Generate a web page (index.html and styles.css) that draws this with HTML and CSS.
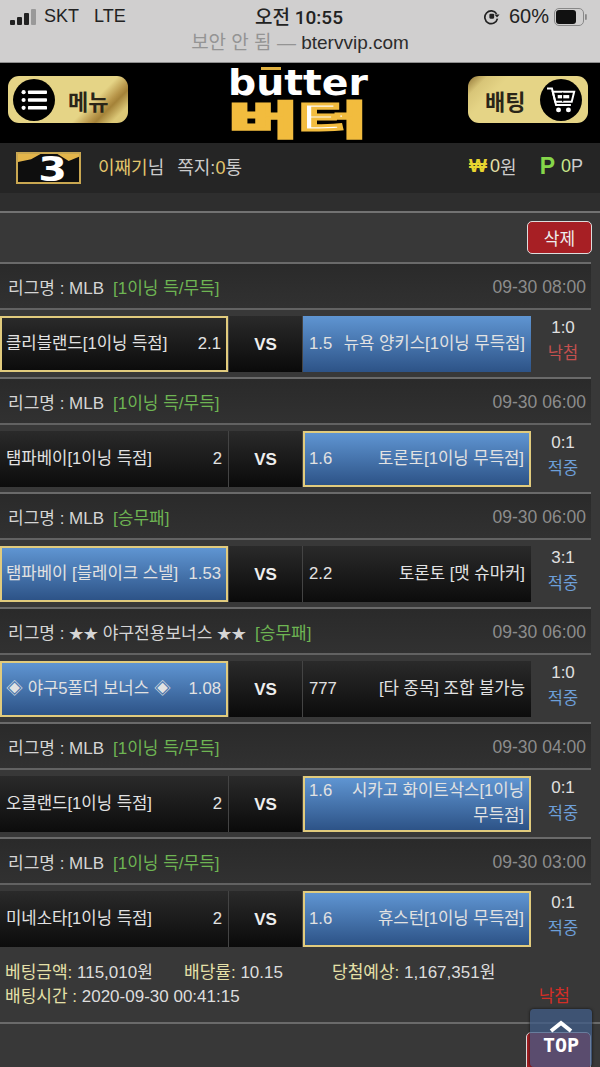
FILE: index.html
```
<!DOCTYPE html>
<html lang="ko">
<head>
<meta charset="utf-8">
<title>butter</title>
<link rel="stylesheet" href="styles.css">
</head>
<body>
<div class="browser">
  <div class="status">
    <div class="st-left">
      <svg width="27" height="16" viewBox="0 0 27 16"><rect x="0" y="11" width="5" height="5" rx="1" fill="#222"/><rect x="7" y="8" width="5" height="8" rx="1" fill="#222"/><rect x="14" y="4" width="5" height="12" rx="1" fill="#222"/><rect x="21" y="0" width="5" height="16" rx="1" fill="#999"/></svg>
      <span>SKT</span><span class="lte">LTE</span>
    </div>
    <div class="st-time">오전 10:55</div>
    <div class="st-right">
      <svg width="17" height="17" viewBox="0 0 16 16"><path d="M12.8 5.5A6 6 0 1 0 13.6 10" fill="none" stroke="#222" stroke-width="1.6"/><path d="M15.6 6.2H10.8L13.2 9z" fill="#222"/><rect x="6" y="5.5" width="4.5" height="4.5" rx="1" fill="#222"/></svg>
      <span class="pct">60%</span>
      <svg width="34" height="18" viewBox="0 0 34 18"><rect x="0.5" y="0.5" width="29" height="17" rx="4.5" fill="none" stroke="#888"/><rect x="2" y="2" width="20" height="14" rx="3" fill="#111"/><rect x="31" y="6" width="1.8" height="6" rx="0.9" fill="#888"/></svg>
    </div>
  </div>
  <div class="url"><span class="insecure">보안 안 됨 —</span> btervvip.com</div>
</div>
<header class="head">
  <div class="pill pill-menu">
    <span class="disc"><svg width="30" height="26" viewBox="0 0 30 26"><g fill="#fff"><circle cx="3" cy="4" r="2.4"/><circle cx="3" cy="13" r="2.4"/><circle cx="3" cy="22" r="2.4"/><rect x="8" y="2" width="22" height="4" rx="1"/><rect x="8" y="11" width="22" height="4" rx="1"/><rect x="8" y="20" width="22" height="4" rx="1"/></g></svg></span>
    <span class="pill-label">메뉴</span>
  </div>
  <div class="logo">
    <svg class="logo-svg" width="140" height="79" viewBox="0 0 140 79">
      <defs>
        <linearGradient id="logoFill" x1="0" x2="1" y1="0" y2="0">
          <stop offset="0.53" stop-color="#f2bc3e"/><stop offset="0.53" stop-color="#fff"/>
          <stop offset="0.82" stop-color="#fff"/><stop offset="0.82" stop-color="#f2bc3e"/>
        </linearGradient>
      </defs>
      <rect x="33" y="4" width="20" height="3" fill="#e0b040"/>
      <text x="0" y="32" class="logo-en" textLength="140" lengthAdjust="spacingAndGlyphs">butter</text>
      <text x="1" y="71" class="logo-ko" textLength="138" lengthAdjust="spacingAndGlyphs" fill="url(#logoFill)">버터</text>
    </svg>
  </div>
  <div class="pill pill-bet">
    <span class="pill-label">배팅</span>
    <span class="disc"><svg width="36" height="34" viewBox="0 0 36 34"><path d="M1 3h6l5 20h18" fill="none" stroke="#fff" stroke-width="2.4"/><path d="M8 7h26l-3 12H11z" fill="none" stroke="#fff" stroke-width="2.4"/><path d="M14 11h14v4H14z" fill="#fff"/><path d="M20 8v11" stroke="#000" stroke-width="1.5"/><circle cx="15" cy="29" r="3" fill="#fff"/><circle cx="27" cy="29" r="3" fill="#fff"/></svg></span>
  </div>
</header>
<section class="user">
  <div class="user-left">
    <span class="badge">
      <svg class="badge-bg" width="65" height="32" viewBox="0 0 65 32" preserveAspectRatio="none"><rect width="65" height="32" fill="#0e0e0e"/><path d="M0 0H24L14 6 0 9zM65 0H42L54 8 65 3z" fill="#e3b54a"/></svg>
      <span class="badge-num">3</span>
    </span>
    <span class="gold">이째기</span><span>님</span>
    <span class="note">쪽지:<span class="gold">0</span>통</span>
  </div>
  <div class="user-right">
    <span class="won">₩</span><span class="cream">0</span><span>원</span>
    <span class="pt">P</span><span class="lime">0</span><span>P</span>
  </div>
</section>
<main class="content">
  <div class="del-row"><button class="del">삭제</button></div>

  <article class="game">
    <div class="league"><span>리그명 : MLB</span><span class="kind">[1이닝 득/무득]</span><time>09-30 08:00</time></div>
    <div class="match">
      <div class="team sel-dark"><span>클리블랜드[1이닝 득점]</span><span>2.1</span></div>
      <div class="vs">VS</div>
      <div class="team blue"><span>1.5</span><span>뉴욕 양키스[1이닝 무득점]</span></div>
      <div class="res"><span>1:0</span><span class="lose">낙첨</span></div>
    </div>
  </article>

  <article class="game">
    <div class="league"><span>리그명 : MLB</span><span class="kind">[1이닝 득/무득]</span><time>09-30 06:00</time></div>
    <div class="match">
      <div class="team"><span>탬파베이[1이닝 득점]</span><span>2</span></div>
      <div class="vs">VS</div>
      <div class="team blue sel"><span>1.6</span><span>토론토[1이닝 무득점]</span></div>
      <div class="res"><span>0:1</span><span class="win">적중</span></div>
    </div>
  </article>

  <article class="game">
    <div class="league"><span>리그명 : MLB</span><span class="kind">[승무패]</span><time>09-30 06:00</time></div>
    <div class="match">
      <div class="team blue sel"><span>탬파베이 [블레이크 스넬]</span><span>1.53</span></div>
      <div class="vs">VS</div>
      <div class="team"><span>2.2</span><span>토론토 [맷 슈마커]</span></div>
      <div class="res"><span>3:1</span><span class="win">적중</span></div>
    </div>
  </article>

  <article class="game">
    <div class="league"><span>리그명 : <span class="star">★★</span> 야구전용보너스 <span class="star">★★</span></span><span class="kind">[승무패]</span><time>09-30 06:00</time></div>
    <div class="match">
      <div class="team blue sel"><span>◈ 야구5폴더 보너스 ◈</span><span>1.08</span></div>
      <div class="vs">VS</div>
      <div class="team"><span>777</span><span>[타 종목] 조합 불가능</span></div>
      <div class="res"><span>1:0</span><span class="win">적중</span></div>
    </div>
  </article>

  <article class="game">
    <div class="league"><span>리그명 : MLB</span><span class="kind">[1이닝 득/무득]</span><time>09-30 04:00</time></div>
    <div class="match">
      <div class="team"><span>오클랜드[1이닝 득점]</span><span>2</span></div>
      <div class="vs">VS</div>
      <div class="team blue sel two-line"><span>1.6</span><span class="wrap">시카고 화이트삭스[1이닝 무득점]</span></div>
      <div class="res"><span>0:1</span><span class="win">적중</span></div>
    </div>
  </article>

  <article class="game">
    <div class="league"><span>리그명 : MLB</span><span class="kind">[1이닝 득/무득]</span><time>09-30 03:00</time></div>
    <div class="match">
      <div class="team"><span>미네소타[1이닝 득점]</span><span>2</span></div>
      <div class="vs">VS</div>
      <div class="team blue sel"><span>1.6</span><span>휴스턴[1이닝 무득점]</span></div>
      <div class="res"><span>0:1</span><span class="win">적중</span></div>
    </div>
  </article>

  <div class="summary">
    <div class="sum-line">
      <span class="s1"><span class="cream">베팅금액:</span> 115,010원</span>
      <span class="s2"><span class="cream">배당률:</span> 10.15</span>
      <span><span class="cream">당첨예상:</span> 1,167,351원</span>
    </div>
    <div class="sum-line sum-second">
      <span><span class="cream">배팅시간 :</span> 2020-09-30 00:41:15</span>
      <span class="red">낙첨</span>
    </div>
  </div>
  <div class="next"><span class="del-peek"></span></div>
</main>
<a class="top"><svg width="24" height="13" viewBox="0 0 24 13"><path d="M2 11 12 3l10 8" fill="none" stroke="#fff" stroke-width="4"/></svg><span>TOP</span></a>
</body>
</html>
```
FILE: styles.css
```
* { box-sizing: border-box; }
html, body { margin: 0; padding: 0; }
body {
  width: 600px; height: 1067px; overflow: hidden; position: relative;
  background: #383838; color: #ddd;
  font-family: "Liberation Sans", "Noto Sans CJK KR", sans-serif;
  font-size: 17px;
}
.browser { height: 63px; background: #d0cfcf; border-bottom: 1px solid #8e8e8e; color: #222; }
.status { height: 33px; display: grid; grid-template-columns: 1fr auto 1fr; align-items: center; padding: 0 12px 0 10px; font-size: 18px; }
.st-left { display: flex; align-items: center; gap: 7px; }
.lte { margin-left: 8px; }
.st-time { font-family: Roboto, "Noto Sans CJK KR", sans-serif; font-size: 19px; font-weight: 500; margin-top: -2px; }
.st-right { display: flex; align-items: center; justify-content: flex-end; gap: 5px; }
.pct { font-size: 20px; margin-left: 4px; }
.url { text-align: center; font-size: 19px; height: 29px; line-height: 20px; color: #2c2c2c; }
.insecure { color: #949494; }
.head { height: 80px; background: #000; display: flex; justify-content: space-between; align-items: flex-start; padding: 13px 12px 0 8px; }
.pill { width: 120px; height: 47px; border-radius: 11px; display: flex; align-items: center; color: #222; }
.pill-menu { padding-left: 5px; gap: 13px; background: linear-gradient(135deg, #e5d486 0 66%, #b8964a 76%, #a48238 80%, #dcc877 90%); }
.pill-bet { padding-left: 17px; gap: 15px; background: linear-gradient(135deg, #8f7233 0, #d8c578 12%, #e5d486 25%); }
.disc { flex: none; width: 42px; height: 42px; border-radius: 50%; background: #000; display: flex; align-items: center; justify-content: center; }
.disc svg { width: 26px; height: 24px; }
.pill-bet .disc svg { width: 30px; height: 28px; }
.pill-label { font-size: 22px; font-weight: 700; color: #2a2518; white-space: nowrap; }
.logo { margin-top: -13px; height: 79px; }
.logo-svg { overflow: visible; display: block; }
.logo-en { font: 700 35px "DejaVu Sans", sans-serif; fill: #fff; }
.logo-ko { font: 700 39px "Noto Sans CJK KR", sans-serif; stroke: #f2bc3e; stroke-width: 3px; }
.user { height: 50px; background: #252525; display: flex; justify-content: space-between; align-items: center; padding: 0 17px 4px 16px; font-size: 18px; color: #ccc; }
.user-left, .user-right { display: flex; align-items: center; }
.gold { color: #e3c56c; }
.cream { color: #e5e0a8; }
.lime { color: #c9e88a; }
.badge { width: 65px; height: 32px; margin-right: 17px; margin-top: 4px; position: relative; display: flex; align-items: center; justify-content: center; border: 2px solid #c9a751; }
.badge-bg { position: absolute; left: 0; top: 0; width: 100%; height: 100%; }
.badge-num { position: relative; font: 700 33px "DejaVu Sans", sans-serif; color: #fff; line-height: 1; margin: 3px 0 0 7px; transform: scaleX(1.25); }
.note { margin-left: 13px; }
.won { color: #e8d530; font-weight: 700; font-size: 19px; margin-right: 3px; }
.pt { color: #86d64a; font-weight: 700; font-size: 23px; margin-left: 23px; margin-right: 6px; }
.content { padding-top: 18px; background: linear-gradient(#2e2e2e 0 18px, #383838 18px); }
.del-row { height: 51px; border-top: 2px solid #727272; display: flex; justify-content: flex-end; align-items: center; padding-right: 8px; }
.del { width: 65px; height: 33px; border-radius: 5px; border: 1px solid #ddd; background: #a71f24; color: #eee; font: 17px "Liberation Sans", "Noto Sans CJK KR", sans-serif; padding: 0; }
.game { height: 115px; border-top: 2px solid #6a6a6a; width: 591px; }
.league { height: 46px; display: flex; align-items: center; padding: 0 5px 0 8px; border-bottom: 2px solid #626262; background: linear-gradient(#2a2a2a, #313131); color: #d5d5d5; }
.star { font-size: 14.5px; }
.kind { color: #6eb553; margin-left: 9px; }
.league time { margin-left: auto; margin-top: 3px; color: #8c8c8c; font-size: 17.5px; }
.match { height: 56px; margin-top: 6px; display: flex; }
.team { width: 228px; flex: none; display: flex; justify-content: space-between; align-items: center; padding: 0 6px 1px; background: linear-gradient(#2a2a2a, #0c0c0c); color: #e2e2e2; font-size: 16.7px; text-align: right; line-height: 25px; }
.team.blue { background: linear-gradient(#5f95d2, #2d5387); }
.sel, .sel-dark { border: 2px solid #e1cb7d; padding: 0 5px 1px 4px; }
.two-line { align-items: flex-start; padding-top: 0; }
.vs { width: 75px; flex: none; border-left: 1px solid #444; border-right: 1px solid #444; display: flex; align-items: center; justify-content: center; padding-top: 2px; font-weight: 700; color: #eee; background: linear-gradient(#2a2a2a, #0a0a0a); }
.wrap { width: 176px; word-break: keep-all; }
.res { flex: 1; display: flex; flex-direction: column; align-items: center; padding: 0 0 0 4px; margin-top: -1px; line-height: 25px; color: #e0e0e0; }
.lose { color: #c4504f; font-size: 16.5px; margin-top: 1px; }
.win { color: #6d9fd8; font-size: 16.5px; margin-top: 1px; }
.summary { padding: 6px 21px 0 5px; width: 591px; color: #ddd; }
.sum-line { height: 24px; display: flex; align-items: center; white-space: nowrap; }
.s1 { width: 179px; }
.s2 { width: 148px; }
.sum-second { justify-content: space-between; }
.red { color: #d22e26; }
.next { margin-top: 16px; border-top: 2px solid #6a6a6a; height: 60px; position: relative; }
.del-peek { position: absolute; left: 526px; top: 8px; width: 65px; height: 40px; border-radius: 5px; border: 1px solid #ddd; background: #a71f24; }
.top { position: absolute; left: 530px; top: 1009px; width: 62px; height: 58px; border-radius: 4px; background: rgba(64, 92, 135, 0.75); box-shadow: 0 0 3px #111; display: flex; flex-direction: column; align-items: center; padding-top: 11px; color: #fff; font: 700 20px "DejaVu Sans Mono", monospace; line-height: 22px; gap: 1px; }
```
